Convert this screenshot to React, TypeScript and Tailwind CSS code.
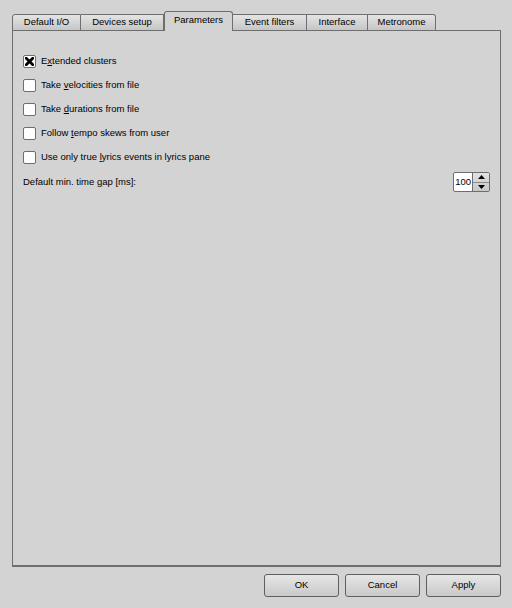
import type { ReactNode } from 'react'

const TABS = ['Default I/O', 'Devices setup', 'Parameters', 'Event filters', 'Interface', 'Metronome']
const TAB_W = [69, 83, 69, 74, 61, 68]

function Mn({ children }: { children: ReactNode }) {
  return <span className="underline underline-offset-[1px]">{children}</span>
}

function Check({ checked, children }: { checked?: boolean; children: ReactNode }) {
  return (
    <div className="flex h-[13px] items-center gap-[5px]">
      <span className="flex h-[13px] w-[13px] items-center justify-center rounded-[2px] border border-[#6e6e6e] bg-white">
        {checked && (
          <svg width="9" height="9" viewBox="0 0 9 9">
            <path d="M1.2 1.2 L7.8 7.8 M7.8 1.2 L1.2 7.8" stroke="#000" strokeWidth="2.8" strokeLinecap="square" />
          </svg>
        )}
      </span>
      <span>{children}</span>
    </div>
  )
}

function Btn({ label }: { label: string }) {
  return (
    <button className="h-[23px] w-[75px] rounded-[3px] border border-[#5f5f5f] bg-gradient-to-b from-[#e6e6e6] to-[#c9c9c9] text-black">
      {label}
    </button>
  )
}

export default function App() {
  return (
    <div
      className="flex h-[608px] w-[512px] flex-col bg-[#d3d3d3] pt-[11px] pr-[11px] pl-[12px] text-[9.5px] text-black"
      style={{ fontFamily: '"Liberation Sans", Arial, sans-serif' }}
    >
      <div className="relative z-10 -mb-px flex h-[20px] items-end">
        {TABS.map((t, i) => {
          const active = i === 2
          return (
            <div
              key={t}
              style={{ width: TAB_W[i] }}
              className={
                active
                  ? 'flex h-[20px] items-center justify-center rounded-t-[3px] border border-b-0 border-[#6e6e6e] bg-[#d3d3d3] pb-[2px]'
                  : 'flex h-[17px] items-center justify-center border-t border-r border-b border-[#6e6e6e] bg-gradient-to-b from-[#e4e4e4] to-[#c6c6c6] first:rounded-tl-[3px] first:border-l last:rounded-tr-[3px]'
              }
            >
              {t}
            </div>
          )
        })}
      </div>
      <div className="flex h-[537px] w-[489px] flex-col border-t border-r border-b-2 border-l border-[#6e6e6e] px-[10px] pt-[24px]">
        <div className="flex flex-col gap-[11px]">
          <Check checked>
            E<Mn>x</Mn>tended clusters
          </Check>
          <Check>
            Take <Mn>v</Mn>elocities from file
          </Check>
          <Check>
            Take <Mn>d</Mn>urations from file
          </Check>
          <Check>
            Follow <Mn>t</Mn>empo skews from user
          </Check>
          <Check>
            Use only true <Mn>l</Mn>yrics events in lyrics pane
          </Check>
        </div>
        <div className="mt-[8px] flex h-[20px] items-center justify-between">
          <span>
            Default min. time <Mn>g</Mn>ap [ms]:
          </span>
          <div className="flex h-[20px] w-[37px] rounded-[2px] border border-[#6e6e6e] bg-white">
            <span className="flex flex-1 items-center justify-end pr-[1px]">100</span>
            <div className="flex w-[17px] flex-col border-l border-[#6e6e6e] bg-gradient-to-b from-[#e2e2e2] to-[#c8c8c8]">
              <div className="flex flex-1 items-center justify-center border-b border-[#8a8a8a]">
                <svg width="7" height="4" viewBox="0 0 7 4">
                  <path d="M0 4 L3.5 0 L7 4 Z" fill="#000" />
                </svg>
              </div>
              <div className="flex flex-1 items-center justify-center">
                <svg width="7" height="4" viewBox="0 0 7 4">
                  <path d="M0 0 L3.5 4 L7 0 Z" fill="#000" />
                </svg>
              </div>
            </div>
          </div>
        </div>
      </div>
      <div className="mt-[7px] flex justify-end gap-[6px]">
        <Btn label="OK" />
        <Btn label="Cancel" />
        <Btn label="Apply" />
      </div>
    </div>
  )
}
